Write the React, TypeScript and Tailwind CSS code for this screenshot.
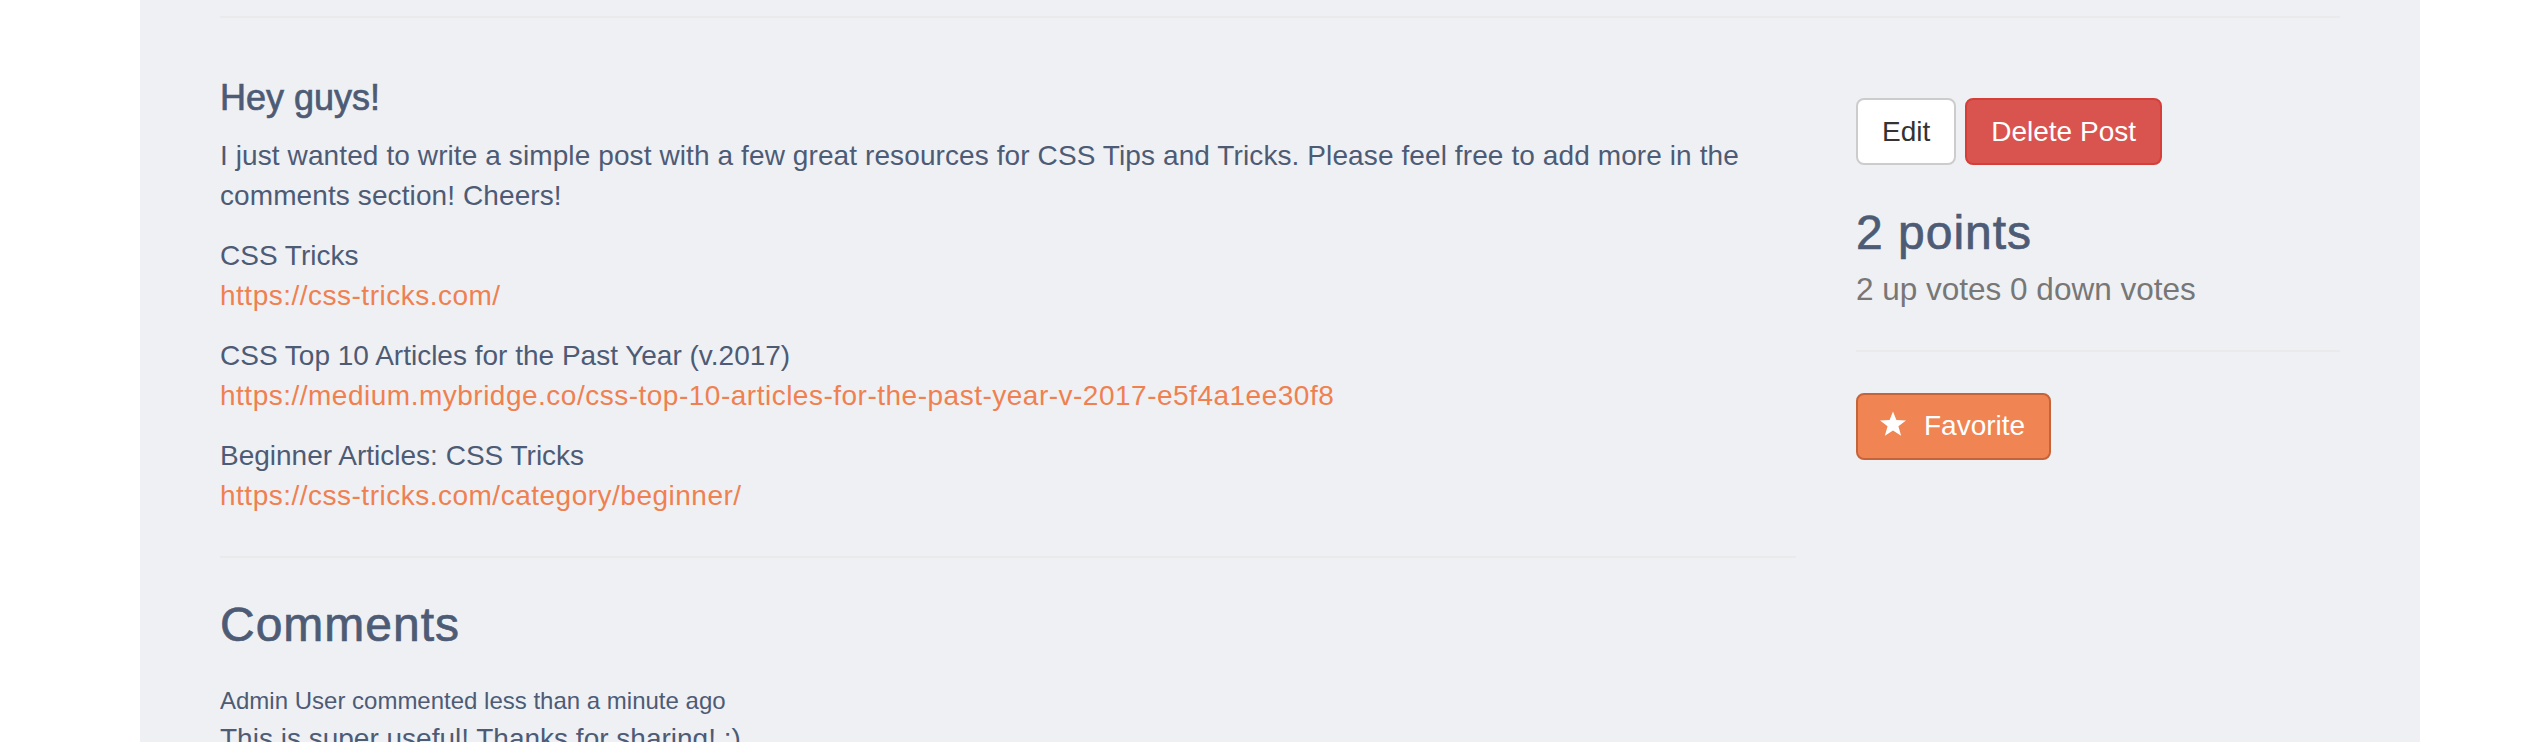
import React from "react";

function Star() {
  return (
    <svg width="28" height="26" viewBox="0 0 24 23" fill="#ffffff" aria-hidden="true">
      <polygon points="12,0.5 15,8 23.5,8.3 16.8,13.6 19.2,22 12,17.2 4.8,22 7.2,13.6 0.5,8.3 9,8" />
    </svg>
  );
}

export default function App() {
  const text = "text-[#4d5b75]";
  const link = "text-[#ef8050] no-underline tracking-[0.5px]";
  const heavy = "[-webkit-text-stroke:0.7px_#4d5b75]";
  return (
    <div className="w-full h-[742px] overflow-hidden bg-white font-['Liberation_Sans',Arial,sans-serif]">
      <div className="ml-[140px] w-[2280px] h-full bg-[#eff0f4] px-[80px]">
        <div className="pt-[16px]">
          <div className="h-[2px] bg-[#eaeaea]" />
        </div>
        <div className="flex gap-[60px]">
          <div className="w-[1576px] shrink-0">
            <h4 className={`mt-[60px] text-[36px] leading-[39.6px] ${text} ${heavy}`}>Hey guys!</h4>
            <p className={`mt-[18px] text-[28px] leading-[40px] tracking-[0.1px] ${text}`}>
              I just wanted to write a simple post with a few great resources for CSS Tips and Tricks. Please feel free to add more in the comments section! Cheers!
            </p>
            <p className={`mt-[20px] text-[28px] leading-[40px] ${text}`}>
              CSS Tricks
              <br />
              <a className={link} href="#">https://css-tricks.com/</a>
            </p>
            <p className={`mt-[20px] text-[28px] leading-[40px] ${text}`}>
              CSS Top 10 Articles for the Past Year (v.2017)
              <br />
              <a className={link} href="#">https://medium.mybridge.co/css-top-10-articles-for-the-past-year-v-2017-e5f4a1ee30f8</a>
            </p>
            <p className={`mt-[20px] text-[28px] leading-[40px] ${text}`}>
              Beginner Articles: CSS Tricks
              <br />
              <a className={link} href="#">https://css-tricks.com/category/beginner/</a>
            </p>
            <div className="mt-[40px] h-[2px] bg-[#eaeaea]" />
            <h3 className={`mt-[41px] text-[48px] leading-[52.8px] tracking-[1px] ${text} ${heavy}`}>Comments</h3>
            <div className={`mt-[33px] text-[24px] leading-[34.3px] ${text}`}>
              Admin User commented less than a minute ago
            </div>
            <p className={`text-[28px] leading-[40px] ${text}`}>This is super useful! Thanks for sharing! :)</p>
          </div>
          <div className="w-[484px] shrink-0">
            <div className="mt-[80px] flex gap-[9px]">
              <button className="h-[67px] px-[24px] border-2 border-[#cccccc] bg-white rounded-[8px] text-[28px] text-[#333333] leading-[40px]">
                Edit
              </button>
              <button className="h-[67px] px-[24px] border-2 border-[#d43f3a] bg-[#d9534f] rounded-[8px] text-[28px] text-white leading-[40px]">
                Delete Post
              </button>
            </div>
            <h3 className={`mt-[42px] text-[48px] leading-[52.8px] tracking-[1px] ${text} ${heavy}`}>2 points</h3>
            <div className="mt-[9px] text-[31.5px] leading-[40px] text-[#777777]">2 up votes 0 down votes</div>
            <div className="mt-[41px] h-[2px] bg-[#eaeaea]" />
            <button className="mt-[41px] h-[67px] pl-[21px] pr-[24px] border-2 border-[#c4643b] bg-[#f08453] rounded-[8px] text-[28px] text-white leading-[40px] flex items-center gap-[17px]">
              <span className="-mt-[5px] flex"><Star /></span>
              <span>Favorite</span>
            </button>
          </div>
        </div>
      </div>
    </div>
  );
}
